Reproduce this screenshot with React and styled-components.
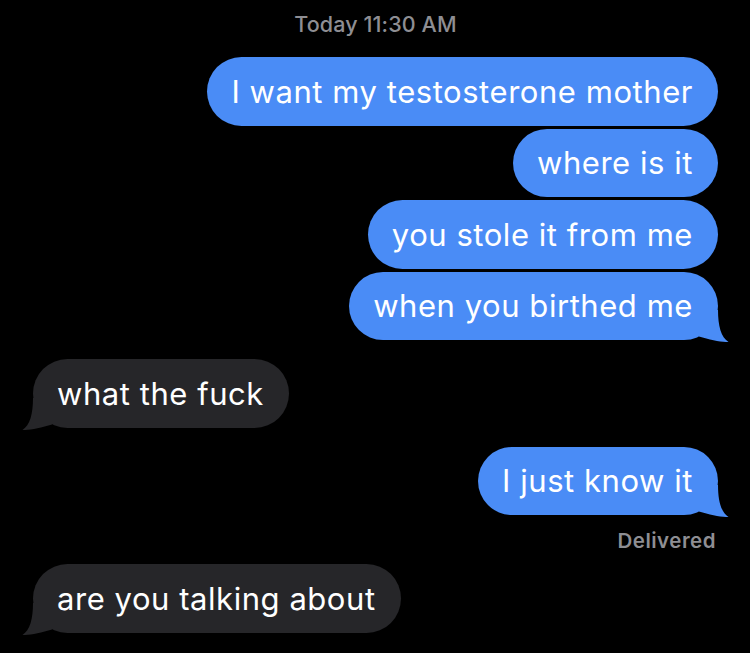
import React from "react";
import styled, { createGlobalStyle } from "styled-components";

const Global = createGlobalStyle`
  html, body { margin: 0; padding: 0; background: #000; }
  body { font-family: "Inter", "Roboto", "Liberation Sans", sans-serif; -webkit-font-smoothing: antialiased; }
`;

const Thread = styled.div`
  width: 750px;
  height: 653px;
  box-sizing: border-box;
  padding: 12px 32px 0 33px;
  display: flex;
  flex-direction: column;
  background: #000;
  overflow: hidden;
`;

const Stamp = styled.div`
  align-self: center;
  color: #8e8e93;
  font-size: 21.5px;
  line-height: 25px;
  font-weight: 500;
  letter-spacing: 0.1px;
  margin-bottom: 20px;
`;

const Group = styled.div`
  display: flex;
  flex-direction: column;
  align-items: ${(p) => (p.$sent ? "flex-end" : "flex-start")};
  gap: 3px;
  margin-top: ${(p) => p.$mt || 0}px;
`;

const Bubble = styled.div`
  position: relative;
  height: 68.5px;
  box-sizing: border-box;
  display: flex;
  align-items: center;
  padding: 0 25px 0 24px;
  border-radius: 35px;
  background: ${(p) => (p.$sent ? "#4a8cf6" : "#262629")};
  color: #fff;
  font-size: 31px;
  letter-spacing: 0.55px;
  white-space: nowrap;
`;

const TailSvg = styled.svg`
  position: absolute;
  bottom: -2px;
  width: 40px;
  height: 32px;
  ${(p) =>
    p.$sent
      ? "right: -11px;"
      : "left: -11px; transform: scaleX(-1);"}
`;

const Delivered = styled.div`
  align-self: flex-end;
  margin: 14px 2px 0 0;
  color: #8e8e93;
  font-size: 20.5px;
  line-height: 24px;
  font-weight: 600;
  letter-spacing: 0.5px;
`;

function Tail({ sent }) {
  return (
    <TailSvg $sent={sent} viewBox="0 0 40 32" aria-hidden="true">
      <path
        d="M29 0 C29 16 32 27 39.5 32 C33 32.3 21 30 10 26.5 L10 0 Z"
        fill={sent ? "#4a8cf6" : "#262629"}
      />
    </TailSvg>
  );
}

function Msg({ sent, tail, children }) {
  return (
    <Bubble $sent={sent}>
      {children}
      {tail && <Tail sent={sent} />}
    </Bubble>
  );
}

export default function App() {
  return (
    <>
      <Global />
      <Thread>
        <Stamp>Today 11:30 AM</Stamp>
        <Group $sent>
          <Msg sent>I want my testosterone mother</Msg>
          <Msg sent>where is it</Msg>
          <Msg sent>you stole it from me</Msg>
          <Msg sent tail>when you birthed me</Msg>
        </Group>
        <Group $mt={19}>
          <Msg tail>what the fuck</Msg>
        </Group>
        <Group $sent $mt={19}>
          <Msg sent tail>I just know it</Msg>
        </Group>
        <Delivered>Delivered</Delivered>
        <Group $mt={11}>
          <Msg tail>are you talking about</Msg>
        </Group>
      </Thread>
    </>
  );
}
